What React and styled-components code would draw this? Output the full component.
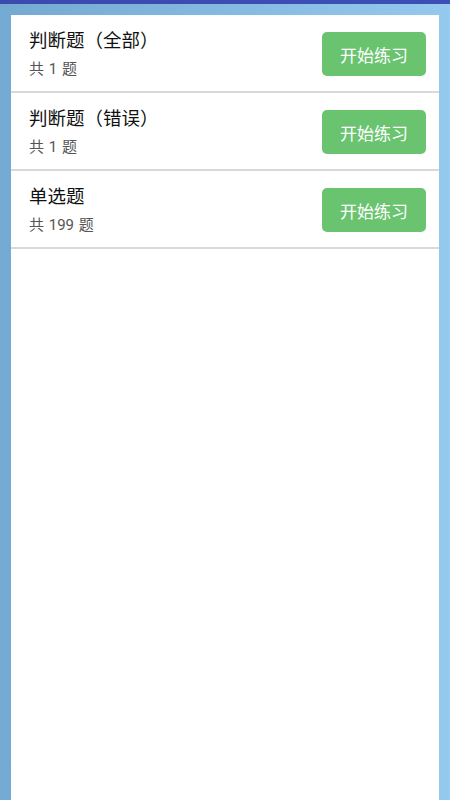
import React from "react";
import styled, { createGlobalStyle } from "styled-components";

const lista = [
    { titulo: "判断题（全部）", total: 1 },
    { titulo: "判断题（错误）", total: 1 },
    { titulo: "单选题", total: 199 },
];

export default function App() {
    return (
        <>
            <Global />
            <Pagina>
                <BarraTopo />
                <Painel>
                    {lista.map((item) => (
                        <Linha key={item.titulo}>
                            <Info>
                                <Titulo>{item.titulo}</Titulo>
                                <Sub>共 {item.total} 题</Sub>
                            </Info>
                            <Botao type="button">开始练习</Botao>
                        </Linha>
                    ))}
                </Painel>
            </Pagina>
        </>
    );
}

/* styles */
const Global = createGlobalStyle`
  html, body {
    margin: 0;
    padding: 0;
    height: 100%;
  }
  body {
    font-family: Roboto, "Noto Sans CJK SC", sans-serif;
  }
  #root {
    height: 100%;
  }
`;

const Pagina = styled.div`
  height: 800px;
  display: flex;
  flex-direction: column;
  background: linear-gradient(90deg, #74a9d2 0%, #84b9e2 50%, #95c9ee 100%);
  overflow: hidden;
`;

const BarraTopo = styled.div`
  height: 4px;
  flex-shrink: 0;
  background: linear-gradient(90deg, #3a4aae 0%, #3d4fb6 100%);
`;

const Painel = styled.div`
  flex: 1;
  margin: 11px 11px 0 11px;
  background: #fff;
`;

const Linha = styled.div`
  height: 78px;
  display: flex;
  align-items: center;
  justify-content: space-between;
  padding: 2px 13px 0 18px;
  box-sizing: border-box;
  border-bottom: 2px solid #d9d9d9;
`;

const Info = styled.div`
  display: flex;
  flex-direction: column;
  gap: 5px;
`;

const Titulo = styled.div`
  font-size: 18.5px;
  line-height: 25px;
  color: #111;
`;

const Sub = styled.div`
  font-size: 15px;
  line-height: 20px;
  color: #555;
  word-spacing: 1px;
`;

const Botao = styled.button`
  width: 104px;
  height: 44px;
  border: 0;
  border-radius: 5px;
  background: #6ac46f;
  color: #fff;
  font-family: Roboto, "Noto Sans CJK SC", sans-serif;
  font-size: 17px;
  padding: 0;
`;
